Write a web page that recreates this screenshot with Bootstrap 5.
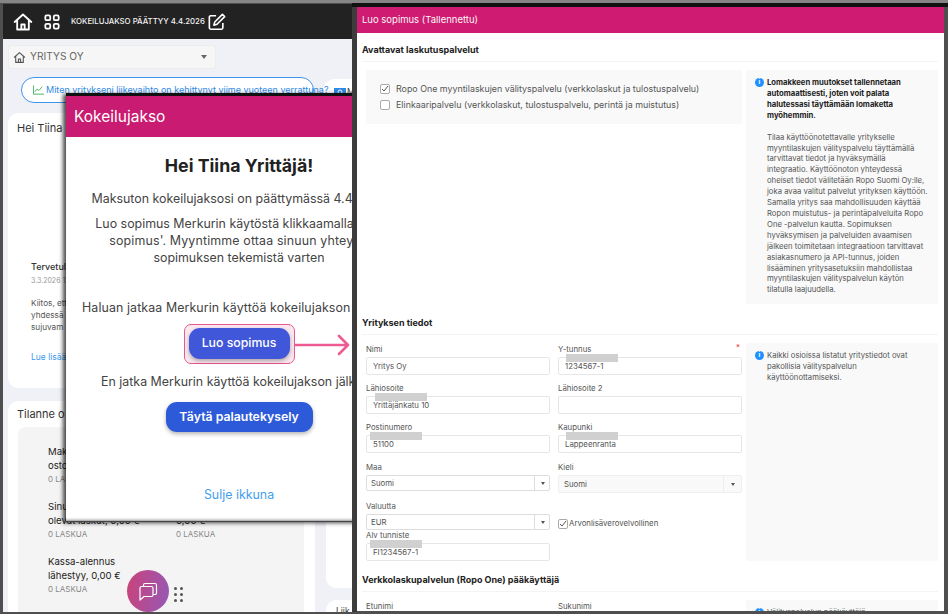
<!DOCTYPE html>
<html lang="fi">
<head>
    <meta charset="UTF-8">
    <title>Kokeilujakso</title>
    <link href="https://cdn.jsdelivr.net/npm/bootstrap@5.3.3/dist/css/bootstrap.min.css" rel="stylesheet" />
    <style>
        body {
            background-color: #4f4f4f;
            font-family: "Inter", "Liberation Sans", sans-serif;
            color: #333;
            margin: 0;
            overflow: hidden;
        }

        /* the picture is three screenshots laid over each other */
        .desk { position: relative; width: 948px; height: 614px; overflow: hidden; }
        .top-edge { position: absolute; left: 0; top: 0; width: 948px; height: 3px; background: #858585; }
        .top-black { position: absolute; left: 352px; top: 3px; right: 0; height: 4px; background: #111; }
        .gap-strip { position: absolute; left: 352px; top: 7px; bottom: 0; width: 5px; background: #3c3c3c; }

        /* app behind */
        .app-win { position: absolute; left: 3px; top: 4px; width: 349px; height: 608px; background: #f0f1f6; overflow: hidden; }
        .app-top { height: 35px; background: #222; color: #f3f3f3; padding-left: 10px; gap: 11px; }
        .app-top-text { font-size: 7.8px; font-weight: 500; margin-right: -8px; white-space: nowrap; }
        .company { margin: 6px 0 0 5px; width: 208px; height: 24px; background: #f6f6f6; border: 1px solid #ececec; border-radius: 3px; padding: 0 8px 0 4px; font-size: 10.2px; color: #666; }
        .caret-down { width: 0; height: 0; border: 3.5px solid transparent; border-top: 4px solid #666; border-bottom: 0; }
        .pill { position: relative; margin: 8px 0 0 18px; width: 293px; height: 26px; background: #fff; border: 1.5px solid #3f96ee; border-radius: 13px; padding-left: 11px; font-size: 9px; color: #2f8ae8; white-space: nowrap; gap: 2px; }
        .pill svg { flex: none; }
        .pill-2 { position: absolute; left: 320px; top: 75px; width: 40px; height: 26px; background: #fff; border-radius: 12px 0 0 12px; padding-left: 11px; font-size: 8.5px; color: #444; gap: 1px; }
        .pill-2 svg { flex: none; }
        .panel-white { position: absolute; background: #fff; border-radius: 10px; }
        .hello-panel { left: 5px; top: 109px; width: 307px; height: 275px; font-size: 11px; line-height: 14px; padding: 8px 9px; }
        .news { margin: 126px 0 0 14px; font-size: 8.2px; white-space: nowrap; line-height: 12px; color: #555; }
        .news-title { font-size: 9px; font-weight: 500; color: #333; }
        .news-date { color: #999; font-size: 7px; margin: 2px 0 10px; }
        .news-link { color: #3b9af0; font-size: 8.5px; margin-top: 18px; }
        .status-panel { left: 5px; top: 397px; width: 307px; height: 230px; font-size: 11px; line-height: 14px; padding: 6px 9px; }
        .status-inner { position: absolute; left: 10px; top: 26px; width: 286px; height: 200px; background: #f4f4f4; border-radius: 8px; padding: 18px 0 0 30px; }
        .status-item { font-size: 9.6px; line-height: 14px; color: #222; width: 129px; height: 55px; white-space: nowrap; }
        .status-count { font-size: 8px; line-height: 12px; color: #888; }
        .side-panel { left: 323px; top: 384px; width: 40px; height: 200px; }
        .side-panel-2 { left: 323px; top: 596px; width: 40px; height: 40px; font-size: 8.5px; padding: 5px 0 0 10px; }

        /* trial dialog, its right part runs under the form */
        .trial-win { position: absolute; left: 66px; top: 93px; width: 346px; height: 429px; background: #fff; border-top: 3px solid #111; border-bottom: 1px solid #444; box-shadow: -3px 1px 4px rgba(0, 0, 0, .7), inset 0 -3px 3px -2px rgba(0, 0, 0, .45); text-align: center; color: #444; font-size: 12.4px; white-space: nowrap; }
        .trial-head { height: 41px; background: #c91b71; color: #fff; font-size: 15.5px; padding-left: 8px; text-align: left; line-height: 41px; }
        .trial-title { font-size: 17.8px; line-height: 24px; font-weight: 700; color: #222; margin: 17px 0 12px; }
        .trial-text { line-height: 17px; }
        .line-wide { letter-spacing: .15px; }
        .line-ask { letter-spacing: .1px; margin-top: 33px; }
        .btn-frame { margin: 8px auto 9px; width: 111px; height: 40px; border: 1.5px solid #e8578f; border-radius: 7px; background: #f9e8ef; padding: 3px 3.5px; }
        .btn-blue { background: #3f57d8; color: #fff; border: 0; border-radius: 11px; font-size: 12.3px; font-weight: 500; box-shadow: 0 2px 4px rgba(0, 0, 0, .3); }
        .btn-blue:hover { background: #3f57d8; color: #fff; }
        .btn-make { width: 101px; height: 31px; }
        .btn-survey { display: block; width: 147px; height: 30px; background: #2c5ad8; font-weight: 600; margin: 12px auto 0; }
        .close-link { color: #3f9ef0; font-size: 12.4px; line-height: 17px; margin-top: 54px; }

        .pink-arrow { position: absolute; left: 294px; top: 334px; }

        .fab { position: absolute; left: 127px; top: 570px; width: 42px; height: 42px; border-radius: 50%; background: linear-gradient(100deg, #cb4279, #9459b6); }
        .drag-dots { position: absolute; left: 174px; top: 587px; display: grid; grid-template-columns: 3px 3px; gap: 3px; }
        .drag-dots i { width: 3px; height: 3px; border-radius: 50%; background: #555; }
        .bottom-edge { position: absolute; left: 0; top: 612px; width: 948px; height: 2px; background: #4f4f4f; }

        /* agreement form */
        .form-win { position: absolute; left: 357px; top: 7px; width: 587px; height: 604px; background: #fff; overflow: hidden; color: #555; }
        .form-head { height: 26px; background: #cf1b72; color: #f7f7f7; font-size: 9.5px; line-height: 26px; padding-left: 5px; }
        .form-section { font-size: 9px; line-height: 12px; font-weight: 700; color: #222; padding-top: 11px; margin: 0 6px 0 5px; border-bottom: 1px solid #f4f4f4; height: 29px; }
        .form-grid { display: grid; grid-template-columns: 376px 192px; gap: 4px; padding-left: 9px; margin-bottom: 2px; }
        .grey-box { background: #f9f9f9; }
        .service-box { height: 54px; margin-top: 8px; padding: 11px 0 0 14px; font-size: 8.9px; line-height: 16px; white-space: nowrap; }
        .tick { width: 10px; height: 10px; border: 1px solid #aaa; border-radius: 2px; background: #fff; margin-right: 6px; flex: none; }
        .info-box { margin-top: 8px; padding: 8px 4px 0 21px; position: relative; font-size: 7.7px; line-height: 10.9px; white-space: nowrap; }
        .info-strong { font-weight: 700; color: #222; margin-bottom: 11px; }
        .info-first { height: 234px; }
        .info-second { height: 218px; }
        .info-third { height: 40px; }
        .info-dot { position: absolute; left: 9px; top: 8px; width: 9px; height: 9px; border-radius: 50%; background: #1e90ff; color: #fff; font-size: 6.5px; line-height: 9px; text-align: center; font-weight: 700; }
        .fields { display: grid; grid-template-columns: 184px 184px; column-gap: 8px; margin-top: 8px; font-size: 7.8px; }
        .fld-wrap { height: 39px; position: relative; }
        .row-tall { height: 40px; }
        .row-short { height: 29px; }
        .row-last { height: 32px; }
        .fld-label { height: 14px; line-height: 12px; }
        .fld.form-control { height: 18px; min-height: 0; border: 1px solid #e6e6e6; border-radius: 2px; padding: 0 6px; font-size: 7.8px; color: #555; box-shadow: none; }
        .sel-box { height: 16px; position: relative; }
        .sel-box .fld.form-control { height: 100%; padding-left: 4px; border-color: #ddd; }
        .sel-grey { height: 18px; }
        .sel-grey .fld.form-control { background: #f9f9f9; border-color: #eee; padding-left: 5px; }
        .sel-end { position: absolute; right: 0; top: 0; bottom: 0; width: 16px; border-left: 1px solid #ddd; display: flex; align-items: center; justify-content: center; }
        .sel-grey .sel-end { width: 19px; border-color: #eee; }
        .sel-end i { border: 2.5px solid transparent; border-top: 3px solid #555; border-bottom: 0; }
        .redact { position: absolute; height: 8px; width: 52px; background: #d0d0d0; top: 11px; }
        .redact-a { left: 8px; }
        .redact-b { left: 9px; }
        .redact-c { left: 4px; }
        .req { position: absolute; right: 2px; top: 0; color: #e33; font-size: 8px; line-height: 8px; }
        .vat-check { padding-top: 18px; }
        .vat-check .tick { margin-right: 1px; }
    </style>
</head>
<body>
<div class="desk">
    <div class="top-edge"></div>

    <div class="app-win">
        <div class="app-top d-flex align-items-center">
            <svg width="20" height="20" viewBox="0 0 24 24" fill="none" stroke="#fff" stroke-width="2.200" stroke-linejoin="round" stroke-linecap="round"><path d="M2 12 12 3l10 9M5 10v11h14V10M10 21v-6h4v6"/></svg>
            <svg width="16" height="16" viewBox="0 0 18 18" fill="none" stroke="#fff" stroke-width="2"><rect x="1.500" y="1.500" width="5.500" height="5.500" rx="1.500"/><rect x="11" y="1.500" width="5.500" height="5.500" rx="1.500"/><rect x="1.500" y="11" width="5.500" height="5.500" rx="1.500"/><rect x="11" y="11" width="5.500" height="5.500" rx="1.500"/></svg>
            <span class="app-top-text">KOKEILUJAKSO PÄÄTTYY 4.4.2026</span>
            <svg width="18" height="18" viewBox="0 0 20 20" fill="none" stroke="#fff" stroke-width="1.800" stroke-linejoin="round"><path d="M9 3H3a1.500 1.500 0 0 0-1.500 1.500v12A1.500 1.500 0 0 0 3 18h12a1.500 1.500 0 0 0 1.500-1.500V11"/><path d="M16 1.500 18.500 4 10 12.500l-3.500 1 1-3.500z"/></svg>
        </div>
        <div class="company d-flex align-items-center">
            <svg width="13" height="13" viewBox="0 0 24 24" fill="none" stroke="#555" stroke-width="2" stroke-linejoin="round"><path d="M2 12 12 3l10 9M5 10v11h14V10M10 21v-6h4v6"/></svg>
            <span class="ms-1 flex-grow-1">YRITYS OY</span>
            <span class="caret-down"></span>
        </div>
        <div class="pill-2 d-flex align-items-center">
            <svg width="12" height="8" viewBox="0 0 12 8"><rect width="12" height="8" fill="#2f8ae8"/><circle cx="6" cy="4" r="2" fill="none" stroke="#fff"/></svg>
            <span>M</span>
        </div>
        <div class="pill d-flex align-items-center">
            <svg width="11" height="10" viewBox="0 0 12 10" fill="none" stroke="#3fae56" stroke-width="1"><path d="M.5 0v9.500H12M2 7l2.500-3 2 1.500L10 1.500"/></svg>
            <span>Miten yritykseni liikevaihto on kehittynyt viime vuoteen verrattuna?</span>
        </div>
        <div class="panel-white hello-panel">
            Hei Tiina
            <div class="news">
                <div class="news-title">Tervetuloa</div>
                <div class="news-date">3.3.2026 12:00</div>
                <div>Kiitos, että</div>
                <div>yhdessä</div>
                <div>sujuvam</div>
                <div class="news-link">Lue lisää</div>
            </div>
        </div>
        <div class="panel-white status-panel">
            Tilanne o
            <div class="status-inner">
                <div class="status-item">Maksettavat<br>ostolaskut<div class="status-count">0 LASKUA</div></div>
                <div class="d-flex">
                    <div class="status-item">Sinulla<br>olevat laskut, 0,00 €<div class="status-count">0 LASKUA</div></div>
                    <div class="status-item">Erääntyvät<br>0,00 €<div class="status-count">0 LASKUA</div></div>
                </div>
                <div class="status-item">Kassa-alennus<br>lähestyy, 0,00 €<div class="status-count">0 LASKUA</div></div>
            </div>
        </div>
        <div class="panel-white side-panel"></div>
        <div class="panel-white side-panel-2">Liik</div>
    </div>

    <div class="trial-win">
        <div class="trial-head">Kokeilujakso</div>
        <div class="trial-title">Hei Tiina Yrittäjä!</div>
        <div class="trial-text">Maksuton kokeilujaksosi on päättymässä 4.4.2026</div>
        <div class="trial-text mt-2">Luo sopimus Merkurin käytöstä klikkaamalla 'Luo<br><span class="line-wide">sopimus'. Myyntimme ottaa sinuun yhteyttä</span><br>sopimuksen tekemistä varten</div>
        <div class="trial-text line-ask">Haluan jatkaa Merkurin käyttöä kokeilujakson jälkeen</div>
        <div class="btn-frame"><button class="btn btn-blue btn-make p-0">Luo sopimus</button></div>
        <div class="trial-text">En jatka Merkurin käyttöä kokeilujakson jälkeen</div>
        <button class="btn btn-blue btn-survey p-0">Täytä palautekysely</button>
        <div class="close-link">Sulje ikkuna</div>
    </div>

    <div class="top-black"></div>
    <div class="gap-strip"></div>

    <svg class="pink-arrow" width="58" height="24" viewBox="0 0 58 24" fill="none" stroke="#ee5b92" stroke-width="2.600" stroke-linecap="round" stroke-linejoin="round"><path d="M1 11H54M45 2l9 9-9 9"/></svg>

    <div class="fab d-flex align-items-center justify-content-center">
        <svg width="24" height="24" viewBox="0 0 24 24" fill="none" stroke="#fff" stroke-width="1.200" stroke-linejoin="round"><path d="M4 9a1.500 1.500 0 0 1 1.500-1.500h10A1.500 1.500 0 0 1 17 9v7a1.500 1.500 0 0 1-1.500 1.500H8L4 21z"/><path d="M7.500 7.500V6A1.500 1.500 0 0 1 9 4.500h10A1.500 1.500 0 0 1 20.500 6v8a1.500 1.500 0 0 1-1.500 1.500h-2"/></svg>
    </div>
    <div class="drag-dots"><i></i><i></i><i></i><i></i><i></i><i></i></div>

    <div class="form-win">
        <div class="form-head">Luo sopimus (Tallennettu)</div>

        <div class="form-section">Avattavat laskutuspalvelut</div>
        <div class="form-grid">
            <div>
                <div class="grey-box service-box">
                    <div class="d-flex align-items-center"><span class="tick d-flex align-items-center justify-content-center"><svg width="8" height="8" viewBox="0 0 8 8" fill="none" stroke="#555"><path d="M1 4l2 2 4-5"/></svg></span>Ropo One myyntilaskujen välityspalvelu (verkkolaskut ja tulostuspalvelu)</div>
                    <div class="d-flex align-items-center"><span class="tick"></span>Elinkaaripalvelu (verkkolaskut, tulostuspalvelu, perintä ja muistutus)</div>
                </div>
            </div>
            <div class="grey-box info-box info-first">
                <span class="info-dot">i</span>
                <div class="info-strong">Lomakkeen muutokset tallennetaan<br>automaattisesti, joten voit palata<br>halutessasi täyttämään lomaketta<br>myöhemmin.</div>
                Tilaa käyttöönotettavalle yritykselle<br>
                myyntilaskujen välityspalvelu täyttämällä<br>
                tarvittavat tiedot ja hyväksymällä<br>
                integraatio. Käyttöönoton yhteydessä<br>
                oheiset tiedot välitetään Ropo Suomi Oy:lle,<br>
                joka avaa valitut palvelut yrityksen käyttöön.<br>
                Samalla yritys saa mahdollisuuden käyttää<br>
                Ropon muistutus- ja perintäpalveluita Ropo<br>
                One -palvelun kautta. Sopimuksen<br>
                hyväksymisen ja palveluiden avaamisen<br>
                jälkeen toimitetaan integraatioon tarvittavat<br>
                asiakasnumero ja API-tunnus, joiden<br>
                lisääminen yritysasetuksiin mahdollistaa<br>
                myyntilaskujen välityspalvelun käytön<br>
                tilatulla laajuudella.
            </div>
        </div>

        <div class="form-section">Yrityksen tiedot</div>
        <div class="form-grid">
            <div class="fields">
                <div class="fld-wrap">
                    <div class="fld-label">Nimi</div>
                    <input class="form-control fld" value="Yritys Oy">
                </div>
                <div class="fld-wrap">
                    <div class="fld-label">Y-tunnus</div>
                    <span class="req">*</span>
                    <input class="form-control fld" value="1234567-1">
                    <span class="redact redact-a"></span>
                </div>
                <div class="fld-wrap">
                    <div class="fld-label">Lähiosoite</div>
                    <input class="form-control fld" value="Yrittäjänkatu 10">
                    <span class="redact redact-b"></span>
                </div>
                <div class="fld-wrap">
                    <div class="fld-label">Lähiosoite 2</div>
                    <input class="form-control fld">
                </div>
                <div class="fld-wrap row-tall">
                    <div class="fld-label">Postinumero</div>
                    <input class="form-control fld" value="51100">
                    <span class="redact redact-c"></span>
                </div>
                <div class="fld-wrap row-tall">
                    <div class="fld-label">Kaupunki</div>
                    <input class="form-control fld" value="Lappeenranta">
                    <span class="redact redact-a"></span>
                </div>
                <div class="fld-wrap">
                    <div class="fld-label">Maa</div>
                    <div class="sel-box"><input class="form-control fld" value="Suomi"><span class="sel-end"><i></i></span></div>
                </div>
                <div class="fld-wrap">
                    <div class="fld-label">Kieli</div>
                    <div class="sel-box sel-grey"><input class="form-control fld" value="Suomi"><span class="sel-end"><i></i></span></div>
                </div>
                <div class="fld-wrap row-short">
                    <div class="fld-label">Valuutta</div>
                    <div class="sel-box"><input class="form-control fld" value="EUR"><span class="sel-end"><i></i></span></div>
                </div>
                <div class="fld-wrap row-short vat-check">
                    <div class="d-flex align-items-center"><span class="tick d-flex align-items-center justify-content-center"><svg width="8" height="8" viewBox="0 0 8 8" fill="none" stroke="#555"><path d="M1 4l2 2 4-5"/></svg></span>Arvonlisäverovelvollinen</div>
                </div>
                <div class="fld-wrap row-last">
                    <div class="fld-label">Alv tunniste</div>
                    <input class="form-control fld" value="FI1234567-1">
                    <span class="redact redact-c"></span>
                </div>
            </div>
            <div class="grey-box info-box info-second">
                <span class="info-dot">i</span>
                Kaikki osioissa listatut yritystiedot ovat<br>
                pakollisia välityspalvelun<br>
                käyttöönottamiseksi.
            </div>
        </div>

        <div class="form-section">Verkkolaskupalvelun (Ropo One) pääkäyttäjä</div>
        <div class="form-grid">
            <div class="fields">
                <div class="fld-wrap"><div class="fld-label">Etunimi</div></div>
                <div class="fld-wrap"><div class="fld-label">Sukunimi</div></div>
            </div>
            <div class="grey-box info-box info-third">
                <span class="info-dot">i</span>
                Välityspalvelun pääkäyttäjä
            </div>
        </div>
    </div>
    <div class="bottom-edge"></div>
</div>
</body>
</html>
